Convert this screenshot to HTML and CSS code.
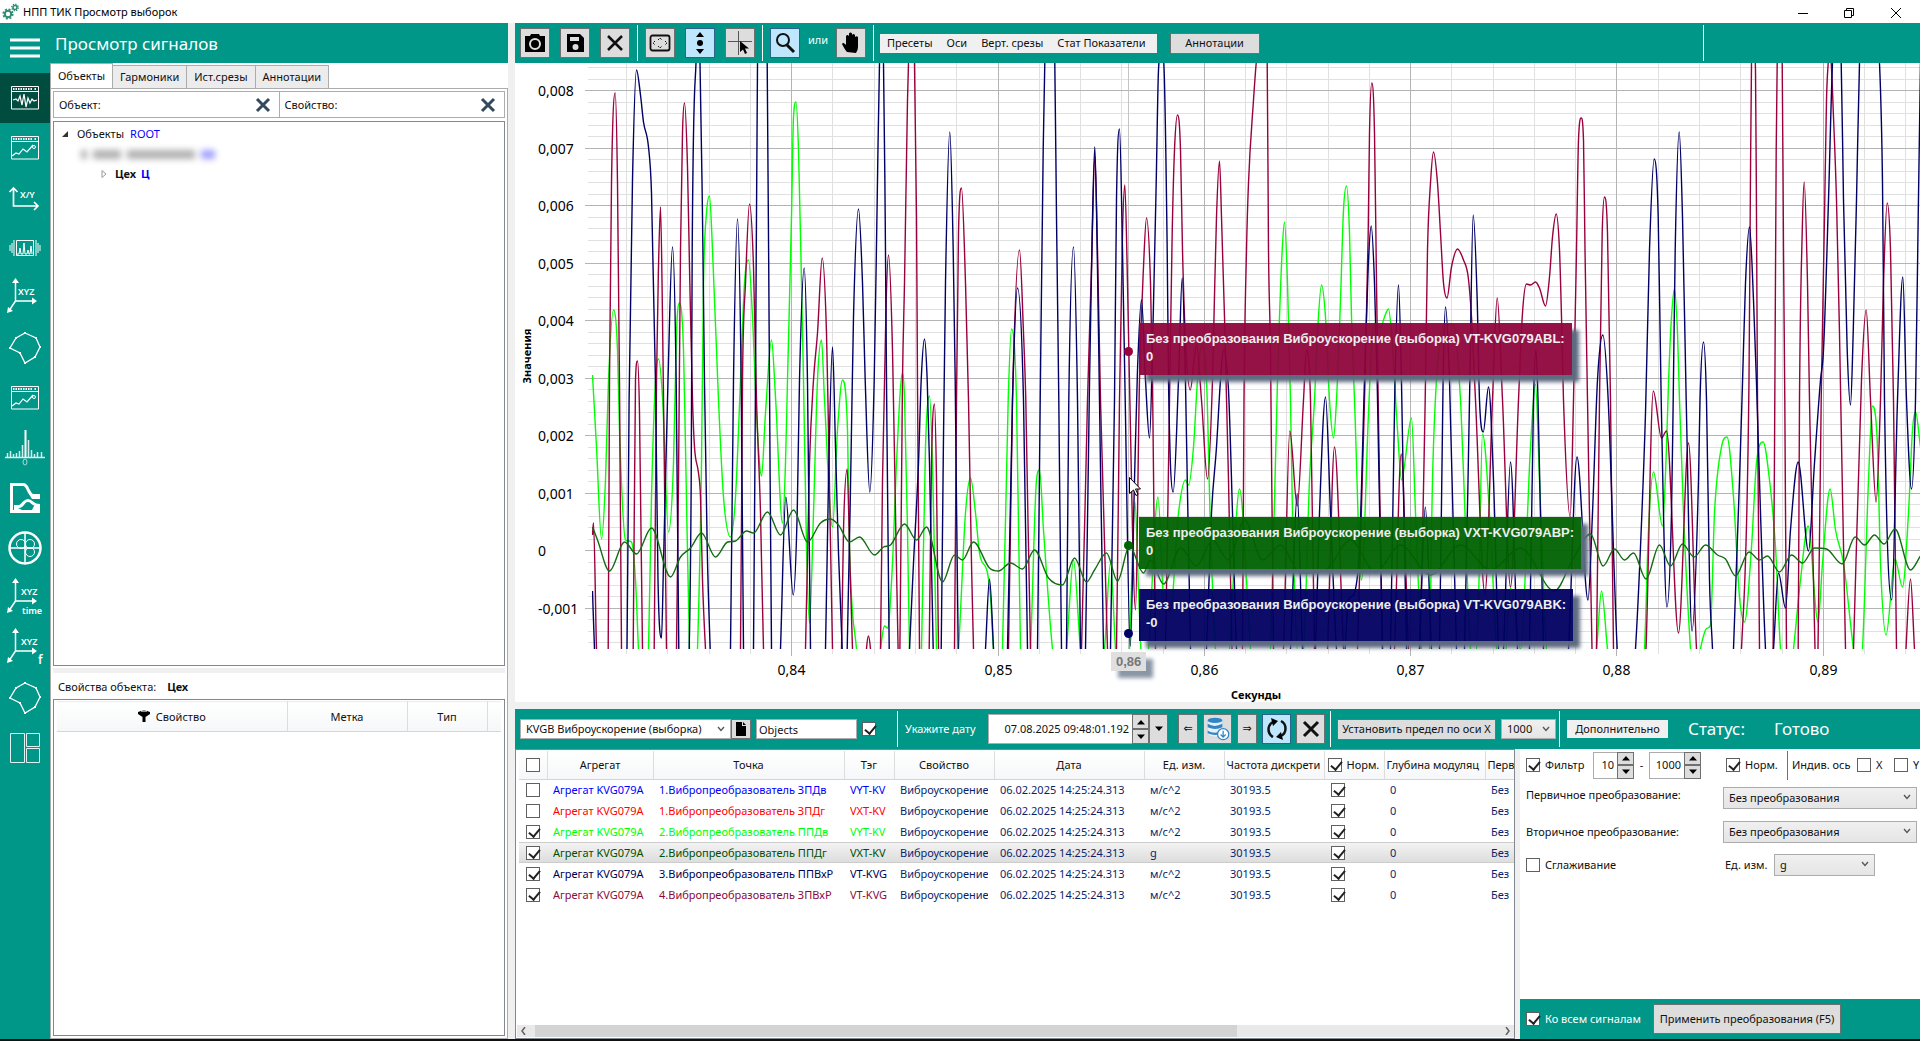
FILE: index.html
```html
<!DOCTYPE html>
<html lang="ru">
<head>
<meta charset="utf-8">
<title>НПП ТИК Просмотр выборок</title>
<link rel="stylesheet" href="styles.css">
</head>
<body>
<svg class="defs" aria-hidden="true">
  <symbol id="i-window" viewBox="0 0 50 50"><path d="M11.500 13.500h27v22.500h-27zM11.500 18.500h27" fill="none" stroke="#fff"/><path d="M13 16h20M34.500 16h2.500" stroke="#fff" stroke-width="2" stroke-dasharray="1.500 1"/></symbol>
  <symbol id="i-xyz" viewBox="0 0 50 50"><path d="M15.500 8v20h19M15.500 28l-6 9" fill="none" stroke="#fff" stroke-width="1.500"/><path d="M15.500 5l3.500 5h-7zM37 28l-5 3.500v-7zM7 40l1-6 5 4z" fill="#fff"/></symbol>
  <symbol id="i-poly" viewBox="0 0 50 50"><path d="M25 10l11 5 4 9-5 10-10 6-5-10-10-5 6-10z" fill="none" stroke="#fff" stroke-width="1.300"/><path d="M24 9h2v2h-2zM35 14h2v2h-2zM39 23h2v2h-2zM34 33h2v2h-2zM24 39h2v2h-2zM19 29h2v2h-2zM9 24h2v2H9zM15 14h2v2h-2z" fill="#fff"/></symbol>
  <symbol id="i-chev" viewBox="0 0 8 6"><path d="M1 1l3 3.500L7 1" fill="none" stroke="#555" stroke-width="1.300"/></symbol>
  <symbol id="i-up" viewBox="0 0 8 6"><path d="M0 5.500L4 1l4 4.500z"/></symbol>
  <symbol id="i-down" viewBox="0 0 8 6"><path d="M0 .5h8L4 5z"/></symbol>
</svg>

<header class="titlebar">
  <svg class="app-icon" viewBox="0 0 18 18"><g fill="none" stroke="#2e8b74"><circle cx="7" cy="11" r="3.200" stroke-width="2"/><circle cx="7" cy="11" r="4.800" stroke-width="1.600" stroke-dasharray="2 1.770"/><circle cx="14" cy="4.500" r="2" stroke-width="1.500"/><circle cx="14" cy="4.500" r="3.200" stroke-width="1.400" stroke-dasharray="1.300 1.200"/></g></svg>
  <h1>НПП ТИК Просмотр выборок</h1>
  <div class="window-buttons">
    <button aria-label="Свернуть"><svg viewBox="0 0 10 10"><path d="M0 5.500h10"/></svg></button>
    <button aria-label="Развернуть"><svg viewBox="0 0 10 10"><path d="M.5 2.500h7v7h-7zM2.500 2.500v-2h7v7h-2"/></svg></button>
    <button aria-label="Закрыть"><svg viewBox="0 0 10 10"><path d="M0 0l10 10M10 0L0 10"/></svg></button>
  </div>
</header>

<div class="app">
  <nav class="rail">
    <button aria-label="Меню"><svg viewBox="0 0 50 50"><path d="M10 17h30M10 25h30M10 33h30" stroke="#fff" stroke-width="3"/></svg></button>
    <button class="active" aria-label="Сигналы"><svg viewBox="0 0 50 50"><use href="#i-window"/><path d="M13 27l3-1 2 2 2-5 2 9 2-11 2 13 2-9 2 5 2-4 2 2 3-1" fill="none" stroke="#fff" stroke-width="1.200"/></svg></button>
    <button aria-label="Тренды"><svg viewBox="0 0 50 50"><use href="#i-window"/><path d="M12 33l4-3 3 1 4-5 4 3 6-7" fill="none" stroke="#fff" stroke-width="1.200"/><circle cx="34" cy="24" r="1.500" fill="none" stroke="#fff"/></svg></button>
    <button aria-label="X/Y"><svg viewBox="0 0 50 50"><path d="M13.500 16v17H38M9.500 19l4-4 4 4M34 29l4 4-4 4" fill="none" stroke="#fff" stroke-width="1.700"/><text x="20" y="25" class="t9">X/Y</text></svg></button>
    <button aria-label="Спектр окна"><svg viewBox="0 0 50 50"><path d="M16.500 17.500h17v15h-17zM17 31h2l1-6 1 6h2l1-11 1 11h2l1-4 1 4h1l1-8 1 8M14 17v16M12 20v10M10 22v6M36 17v16M38 20v10M40 22v6" fill="none" stroke="#fff"/></svg></button>
    <button aria-label="XYZ"><svg viewBox="0 0 50 50"><use href="#i-xyz"/><text x="18" y="22" class="t9">XYZ</text></svg></button>
    <button aria-label="Полигон"><svg viewBox="0 0 50 50"><use href="#i-poly"/></svg></button>
    <button aria-label="Тренды 2"><svg viewBox="0 0 50 50"><use href="#i-window"/><path d="M12 33l4-3 3 1 4-5 4 3 6-7" fill="none" stroke="#fff" stroke-width="1.200"/><circle cx="34" cy="24" r="1.500" fill="none" stroke="#fff"/></svg></button>
    <button aria-label="Спектр"><svg viewBox="0 0 50 50"><path d="M5 34.500h40M7.500 34v-4M10.500 34v-6M13.500 34v-3M16.500 34v-4M19.500 34v-6M22.500 34V22M28.500 34V17M31.500 34v-7M34.500 34v-3M37.500 34v-5M41.500 34v-5" stroke="#d2efec" stroke-width="1.500"/><path d="M25.500 35V7" stroke="#fff" stroke-width="2"/><ellipse cx="25" cy="39" rx="2" ry="3" fill="none" stroke="#a9dcd7"/></svg></button>
    <button aria-label="Каскад"><svg viewBox="0 0 50 50"><path d="M11.500 38V11.500H23q3 0 5 5t6 7h6M10 38.500h30M14 33.500h5q2 0 5-4 4-4 8 0 3 3 8 3" fill="none" stroke="#fff" stroke-width="3"/><path d="M29 21h11v5h-8zM14 35h4l6 3H14zM34 33h6v4h-8z" fill="#fff"/></svg></button>
    <button aria-label="Орбита"><svg viewBox="0 0 50 50"><circle cx="25" cy="25" r="15.500" fill="none" stroke="#fff" stroke-width="2.500"/><path d="M9 25h32M25 9v32" stroke="#fff" stroke-width="1.500"/><circle cx="21" cy="21" r="4.500" fill="none" stroke="#fff"/><circle cx="30" cy="21" r="4.500" fill="none" stroke="#fff"/><circle cx="30" cy="29" r="4.500" fill="none" stroke="#fff"/></svg></button>
    <button aria-label="XYZ time"><svg viewBox="0 0 50 50"><use href="#i-xyz"/><text x="21" y="22" class="t9">XYZ</text><text x="22" y="41" class="t8">time</text></svg></button>
    <button aria-label="XYZ f"><svg viewBox="0 0 50 50"><use href="#i-xyz"/><text x="21" y="22" class="t9">XYZ</text><text x="38" y="41" class="t12">f</text></svg></button>
    <button aria-label="Полигон 2"><svg viewBox="0 0 50 50"><use href="#i-poly"/></svg></button>
    <button aria-label="Раскладка"><svg viewBox="0 0 50 50"><path d="M10.500 10.500h14v29h-14zM26.500 10.500h13v13h-13zM26.500 25.500h13v14h-13z" fill="none" stroke="#e0f2f1"/></svg></button>
  </nav>

  <aside class="left">
    <h2>Просмотр сигналов</h2>
    <div class="tabs" role="tablist">
      <button role="tab" class="on">Объекты</button><button role="tab">Гармоники</button><button role="tab">Ист.срезы</button><button role="tab">Аннотации</button>
    </div>
    <div class="tabpage">
      <div class="filters">
        <div class="filter"><label for="f-obj">Объект:</label><input id="f-obj"><button aria-label="Очистить объект"><svg viewBox="0 0 16 16"><path d="M2 2l12 12M14 2L2 14"/></svg></button></div>
        <div class="filter"><label for="f-prop">Свойство:</label><input id="f-prop"><button aria-label="Очистить свойство"><svg viewBox="0 0 16 16"><path d="M2 2l12 12M14 2L2 14"/></svg></button></div>
      </div>
      <ul class="tree">
        <li class="l0"><svg viewBox="0 0 8 8"><path d="M7 1v6H1z" fill="#333"/></svg><span>Объекты</span><b class="code">ROOT</b></li>
        <li class="l1"><i class="m1"></i><i class="m2"></i><i class="m3"></i><i class="m4"></i></li>
        <li class="l2"><svg viewBox="0 0 8 8"><path d="M2 .5v7L6 4z" fill="none" stroke="#999"/></svg><strong>Цех</strong><strong class="blue">Ц</strong></li>
      </ul>
      <div class="hsplit"></div>
      <p class="prop-title">Свойства объекта: <strong>Цех</strong></p>
      <div class="props">
        <table>
          <colgroup><col class="p1"><col class="p2"><col class="p3"><col></colgroup>
          <thead><tr><th><svg class="funnel" viewBox="0 0 12 12"><path d="M0 2q6-3 12 0v2L7.500 7v5h-3V7L0 4z"/><path d="M3 1.500h6" stroke="#5aa0d8"/></svg>Свойство</th><th>Метка</th><th>Тип</th><th></th></tr></thead>
        </table>
      </div>
    </div>
  </aside>

  <main class="main">
    <div class="bar top">
      <button class="tool" aria-label="Снимок"><svg viewBox="0 0 24 24"><path d="M2 5h5l1-2h8l1 2h5v16H2z"/><circle cx="12" cy="13" r="5" fill="none" stroke="#ddd" stroke-width="2"/></svg></button>
      <button class="tool" aria-label="Сохранить"><svg viewBox="0 0 24 24"><path d="M4 3h13l4 4v14H4z"/><path d="M7 6h9v4H7zM12.500 13a3 3 0 110 6 3 3 0 010-6z" fill="#ddd"/></svg></button>
      <button class="tool" aria-label="Удалить"><svg viewBox="0 0 24 24"><path d="M5 5l14 14M19 5L5 19" stroke="#111" stroke-width="2.500"/></svg></button>
      <i class="sep"></i>
      <button class="tool" aria-label="Вписать"><svg viewBox="0 0 24 24"><rect x="2.500" y="4.500" width="19" height="15" rx="2" fill="none" stroke="#111" stroke-width="1.800"/><path d="M10 9l2-2 2 2M10 15l2 2 2-2M7 10l-2 2 2 2M17 10l2 2-2 2" fill="none" stroke="#111" stroke-dasharray="2 1"/></svg></button>
      <button class="tool on" aria-label="Вертикальный масштаб"><svg viewBox="0 0 24 24"><path d="M12 1l4 5H8zM12 23l4-5H8z"/><circle cx="12" cy="12" r="3"/></svg></button>
      <button class="tool" aria-label="Курсор"><svg viewBox="0 0 24 24"><path d="M0 10.500h24M10.500 0v24" stroke="#555"/><path d="M12 10v11l3-2.500 2 4.500 2-1-2-4.500h4z"/></svg></button>
      <i class="sep"></i>
      <button class="tool on" aria-label="Лупа"><svg viewBox="0 0 24 24"><circle cx="10" cy="9" r="6" fill="none" stroke="#111" stroke-width="2"/><path d="M14 14l7 7" stroke="#111" stroke-width="3"/></svg></button>
      <span class="or">или</span>
      <button class="tool" aria-label="Рука"><svg viewBox="0 0 24 24"><path d="M8 21q-2-2-5-8 1-2 3 0l1 1V5q1.500-2 3 0V2.500q1.500-2 3 0V4q1.500-2 3 0v2q1.500-1.500 3 0v10q0 3-2 6z"/></svg></button>
      <i class="sep"></i>
      <div class="menu"><button>Пресеты</button><button>Оси</button><button>Верт. срезы</button><button>Стат Показатели</button></div>
      <button class="btn annot">Аннотации</button>
      <i class="sep far"></i>
    </div>

    <section class="chart" id="chart" aria-label="График сигналов">
      <svg id="plot"></svg>
      <div class="tip maroon">Без преобразования Виброускорение (выборка) VT-KVG079ABL:<br>0</div>
      <div class="tip green">Без преобразования Виброускорение (выборка) VXT-KVG079ABP:<br>0</div>
      <div class="tip navy">Без преобразования Виброускорение (выборка) VT-KVG079ABK:<br>-0</div>
      <div class="xtip">0,86</div>
      <svg class="pointer" viewBox="0 0 12 19"><path d="M.5.500v16l4-3.500 2.500 5.500 2-1-2.500-5.500h5z" fill="#fff" stroke="#000"/></svg>
    </section>
    <div class="hsplit"></div>

    <div class="bar low">
      <span class="sel preset"><select aria-label="Пресет"><option>KVGB Виброускорение (выборка)</option></select><svg><use href="#i-chev"/></svg></span>
      <button class="doc" aria-label="Новый"><svg viewBox="0 0 10 14"><path d="M0 0h6v4h4v10H0zM7 0l3 3H7z"/></svg></button>
      <input class="objects" aria-label="Объекты" value="Objects">
      <input type="checkbox" class="c1" checked aria-label="Использовать объекты">
      <i class="sep"></i>
      <label class="date-label" for="date">Укажите дату</label>
      <span class="date"><input id="date" value="07.08.2025 09:48:01.192"><span class="spin"><button aria-label="Больше"><svg><use href="#i-up"/></svg></button><button aria-label="Меньше"><svg><use href="#i-down"/></svg></button></span><button class="drop" aria-label="Календарь"><svg><use href="#i-down"/></svg></button></span>
      <button class="tool narrow" aria-label="Назад">⇐</button>
      <button class="tool" aria-label="Загрузить"><svg viewBox="0 0 28 28"><path d="M2 4v17q8 5 17 0V4z" fill="#e9eef2" stroke="#b8c4cc" stroke-width=".5"/><g fill="#2f86c6"><ellipse cx="10.500" cy="4" rx="8.500" ry="3"/><path d="M2 8q8 5 17 0v4q-8 4-17 0zM2 16q8 5 17 0v3q-8 4-17 0z"/></g><circle cx="20" cy="20" r="6.500" fill="#fff" stroke="#2f86c6" stroke-width="1.500"/><path d="M20 16v7M17 20.500l3 3 3-3" fill="none" stroke="#2f86c6" stroke-width="1.500"/></svg></button>
      <button class="tool narrow" aria-label="Вперёд">⇒</button>
      <button class="tool on" aria-label="Обновить"><svg viewBox="0 0 24 24"><path d="M8 20A8.500 8.500 0 018 5M16 4a8.500 8.500 0 010 15" fill="none" stroke="#111" stroke-width="2.500"/><path d="M6 1l7 3-5 5zM18 23l-7-3 5-5z"/></svg></button>
      <button class="tool" aria-label="Отмена"><svg viewBox="0 0 24 24"><path d="M5 5l14 14M19 5L5 19" stroke="#111" stroke-width="3"/></svg></button>
      <i class="sep"></i>
      <button class="btn limit">Установить предел по оси X</button>
      <span class="sel lim"><select aria-label="Предел"><option>1000</option></select><svg><use href="#i-chev"/></svg></span>
      <i class="sep"></i>
      <button class="more">Дополнительно</button>
      <span class="status">Статус:</span><output class="status ready">Готово</output>
    </div>

    <div class="lower">
      <div class="gridbox">
        <div class="gridclip">
          <table class="grid">
            <colgroup><col class="g1"><col class="g2"><col class="g3"><col class="g4"><col class="g5"><col class="g6"><col class="g7"><col class="g8"><col class="g9"><col class="g10"><col class="g11"></colgroup>
            <thead><tr><th><input type="checkbox" aria-label="Выбрать все"></th><th>Агрегат</th><th>Точка</th><th>Тэг</th><th>Свойство</th><th>Дата</th><th>Ед. изм.</th><th><span class="left-cut">Частота дискрети</span></th><th><label class="norm"><input type="checkbox" checked>Норм.</label></th><th><span class="left-cut">Глубина модуляц</span></th><th><span class="left-cut">Перв</span></th></tr></thead>
            <tbody id="rows"></tbody>
          </table>
        </div>
        <div class="hscroll"><svg viewBox="0 0 5 8"><path d="M4 0L1 4l3 4"/></svg><div class="track"><div class="thumb"></div></div><svg viewBox="0 0 5 8"><path d="M1 0l3 4-3 4"/></svg></div>
      </div>
      <div class="vsplit"></div>
      <form class="options" onsubmit="return false">
        <div class="row first">
          <label class="chk"><input type="checkbox" checked>Фильтр</label>
          <span class="num low-f"><input aria-label="От" value="10"><span class="spin"><button aria-label="Больше"><svg><use href="#i-up"/></svg></button><button aria-label="Меньше"><svg><use href="#i-down"/></svg></button></span></span>
          <span class="dash">-</span>
          <span class="num high-f"><input aria-label="До" value="1000"><span class="spin"><button aria-label="Больше"><svg><use href="#i-up"/></svg></button><button aria-label="Меньше"><svg><use href="#i-down"/></svg></button></span></span>
          <label class="chk n"><input type="checkbox" checked>Норм.</label>
          <i class="vline"></i>
          <span class="axis">Индив. ось</span>
          <label class="chk x"><input type="checkbox">X</label>
          <label class="chk"><input type="checkbox">Y</label>
        </div>
        <div class="row"><label class="cap raised" for="s1">Первичное преобразование:</label><span class="sel wide"><select id="s1"><option>Без преобразования</option></select><svg><use href="#i-chev"/></svg></span></div>
        <div class="row"><label class="cap" for="s2">Вторичное преобразование:</label><span class="sel wide"><select id="s2"><option>Без преобразования</option></select><svg><use href="#i-chev"/></svg></span></div>
        <div class="row"><label class="chk cap2"><input type="checkbox">Сглаживание</label><label class="unit" for="s3">Ед. изм.</label><span class="sel short"><select id="s3"><option>g</option></select><svg><use href="#i-chev"/></svg></span></div>
        <div class="apply"><label class="chk"><input type="checkbox" checked>Ко всем сигналам</label><button class="btn">Применить преобразования (F5)</button></div>
      </form>
    </div>
  </main>
</div>
<script src="chart.js"></script>
</body>
</html>
```
FILE: styles.css
```css
* { box-sizing: border-box; }
:root { --teal: #009688; --ui: "Noto Sans", "Open Sans", sans-serif; }
body { margin: 0; height: 100vh; display: flex; flex-direction: column; overflow: hidden; font: 11px/16px var(--ui); color: #111; background: #fff; border-bottom: 2px solid #111; }
button, input, select { font: inherit; color: inherit; margin: 0; }
button { padding: 0; cursor: pointer; }
h1, h2, p, ul { margin: 0; padding: 0; font-weight: 400; }
.defs { position: absolute; width: 0; height: 0; }

.titlebar { flex: none; height: 23px; display: flex; align-items: center; }
.app-icon { width: 18px; height: 18px; margin: 0 4px 0 1px; }
.titlebar h1 { font-size: 11px; color: #000; }
.window-buttons { margin-left: auto; display: flex; }
.window-buttons button { width: 46px; height: 20px; border: 0; background: none; }
.window-buttons button:last-child { width: 48px; }
.window-buttons svg { width: 10px; height: 10px; display: block; margin: 2px auto 0; fill: none; stroke: #000; }

.app { flex: 1; min-height: 0; display: flex; }
.rail { flex: none; width: 50px; background: var(--teal); display: flex; flex-direction: column; }
.rail button { height: 50px; border: 0; background: none; }
.rail .active { background: #004d40; }
.rail svg { width: 50px; height: 50px; display: block; }
.rail text { fill: #fff; font-family: var(--ui); }
.t8 { font-size: 9px; font-weight: 600; }
.t9 { font-size: 9px; font-weight: 600; }
.t12 { font-size: 12px; font-weight: 600; }

.left { flex: none; width: 458px; display: flex; flex-direction: column; }
.left h2 { flex: none; height: 40px; background: var(--teal); color: #fff; font-size: 17px; line-height: 42px; padding-left: 5px; }
.tabs { flex: none; height: 25px; display: flex; align-items: flex-end; }
.tabs button { height: 23px; border: 1px solid #acacac; border-bottom: 0; background: #ececec; padding: 0 7px; margin-right: -1px; }
.tabs button.on { height: 25px; background: #fff; padding: 0 7px; }
.tabpage { flex: 1; min-height: 0; border: 1px solid #acacac; padding: 2px; display: flex; flex-direction: column; }
.filters { flex: none; display: flex; height: 27px; }
.filter { flex: 1; display: flex; align-items: center; border: 1px solid #acacac; padding: 0 8px 0 5px; min-width: 0; }
.filter + .filter { border-left: 0; }
.filter input { flex: 1; min-width: 0; border: 0; background: none; outline: 0; }
.filter button { width: 16px; height: 16px; border: 0; background: none; }
.filter svg { display: block; width: 16px; height: 16px; stroke: #34495e; stroke-width: 3; }
.tree { flex: 547; margin-top: 3px; border: 1px solid #828790; list-style: none; padding: 2px 0 0 7px; }
.tree li { height: 20px; display: flex; align-items: center; gap: 6px; }
.tree svg { width: 8px; height: 8px; margin-right: 2px; }
.tree .code { font-weight: 400; color: #00f; }
.tree .blue { color: #00f; }
.tree .l1 { padding-left: 20px; filter: blur(3px); gap: 6px; }
.tree .l1 i { height: 9px; background: #b0b0b0; }
.tree .m1 { width: 6px; } .tree .m2 { width: 28px; } .tree .m3 { width: 68px; }
.tree .l1 .m4 { width: 14px; background: #a0a0ff; }
.tree .l2 { padding-left: 39px; gap: 5px; }
.hsplit { flex: none; height: 7px; background: #f0f0f0; }
.left .hsplit { height: 5px; margin-top: 2px; }
.prop-title { flex: none; height: 26px; line-height: 28px; padding-left: 5px; }
.prop-title strong { margin-left: 8px; }
.props { flex: 336; border: 1px solid #828790; padding: 1px 3px; }
.props table, .grid { border-collapse: collapse; table-layout: fixed; }
.props table { width: 100%; }
.props th { height: 30px; border-top: 1px solid #eee; border-right: 1px solid #ddd; border-bottom: 1px solid #d5d5d5; background: linear-gradient(#fff, #f6f7f9); font-weight: 400; padding: 0; }
.props th:last-child { border-right: 0; }
.p1 { width: 230px; } .p2 { width: 120px; } .p3 { width: 80px; }
.funnel { width: 12px; height: 12px; margin-right: 6px; vertical-align: -1px; }

.main { flex: 1; min-width: 0; display: flex; flex-direction: column; border-left: 7px solid #f0f0f0; }
.bar { flex: none; height: 40px; background: var(--teal); display: flex; align-items: center; color: #fff; overflow: hidden; white-space: nowrap; }
.bar > * { flex: none; }
.sep { width: 1px; height: 36px; background: #fff; }
.tool { width: 30px; height: 30px; border: 1px solid #707070; background: #ddd; color: #111; display: flex; align-items: center; justify-content: center; }
.tool svg { width: 24px; height: 24px; }
.tool.on { background: #bee6fd; border-color: #2c628b; }
.top { padding-left: 5px; }
.top .tool + .tool { margin-left: 10px; }
.top .sep { margin: 0 7px; }
.or { margin: -6px 8px 0; width: 20px; }
.top .menu { display: flex; background: #f0f0f0; color: #111; height: 19px; margin-left: -1px; padding-right: 4px; }
.menu button { border: 0; background: none; padding: 0 7px; }
.btn { border: 1px solid #707070; background: #ddd; color: #111; }
.annot { width: 90px; height: 21px; margin-left: 13px; }
.top .far { margin: 0 216px 0 auto; }

.chart { flex: 1; min-height: 0; position: relative; overflow: hidden; background: #fff; }
#plot { width: 100%; height: 100%; display: block; }
#plot text { font-family: var(--ui); fill: #000; }
#plot .tick { font-size: 14px; }
#plot .title { font-size: 11px; font-weight: 700; }
.tip { position: absolute; left: 624px; height: 52px; padding: 7px 7px 0; font: 700 13px/18px "Liberation Sans", sans-serif; color: #eee; white-space: nowrap; box-shadow: 7px 7px 4px #5d6b80; }
.tip.maroon { top: 260px; background: #8e053cf2; }
.tip.green { top: 454px; background: #006100f2; }
.tip.navy { top: 526px; background: #000061f2; }
.xtip { position: absolute; left: 596px; top: 589px; padding: 0 5px; font: 700 13px/19px "Liberation Sans", sans-serif; color: #777; background: #ddde; box-shadow: 7px 7px 4px #8a95a5; }
.pointer { position: absolute; left: 614px; top: 414px; width: 12px; height: 19px; }

.low { padding-left: 5px; }
.sel { position: relative; display: inline-block; height: 22px; color: #111; }
.sel select { appearance: none; width: 100%; height: 100%; border: 1px solid #acacac; border-radius: 0; background: linear-gradient(#f0f0f0, #e5e5e5); padding: 0 16px 0 5px; }
.sel svg { position: absolute; right: 6px; top: 7px; width: 8px; height: 6px; pointer-events: none; }
.preset { width: 211px; height: 20px; }
.preset select { background: #fff; }
.doc { width: 20px; height: 20px; border: 1px solid #707070; background: #ddd; }
.doc svg { width: 10px; height: 14px; display: block; margin: auto; }
.objects { width: 101px; height: 20px; margin-left: 5px; border: 1px solid #acacac; padding: 0 2px; color: #111; }
input[type=checkbox] { appearance: none; flex: none; position: relative; width: 14px; height: 14px; border: 1px solid #606060; background: #fff; margin: 0; }
input[type=checkbox]:checked::after { content: ""; position: absolute; left: 4px; top: 0; width: 5px; height: 9px; border: solid #212121; border-width: 0 2px 2px 0; transform: rotate(40deg); }
.low .c1 { margin: 0 21px 0 5px; }
.date-label { margin: 0 0 0 7px; width: 83px; }
.date { display: flex; height: 30px; width: 180px; background: #fff; color: #111; }
.date input { flex: 1; min-width: 0; border: 1px solid #acacac; border-right: 0; text-align: right; padding: 0 3px; background: #fff; }
.spin { display: flex; flex-direction: column; width: 17px; }
.spin button, .drop { flex: 1; border: 1px solid #707070; background: #ddd; display: flex; align-items: center; justify-content: center; }
.spin svg, .drop svg { width: 8px; height: 6px; }
.date .drop { flex: none; width: 19px; }
.low .tool { width: 29px; margin-left: 5px; }
.low .tool.narrow { width: 20px; font-family: "DejaVu Sans", sans-serif; }
.low .date + .narrow { margin-left: 10px; }
.low .tool + .sep { margin-left: 5px; }
.limit { width: 159px; height: 21px; margin: 0 5px 0 6px; white-space: nowrap; overflow: hidden; }
.lim { width: 55px; height: 20px; margin-right: 3px; }
.more { width: 101px; height: 18px; border: 0; background: #f0f0f0; color: #111; margin: 0 20px 0 7px; }
.status { font-size: 17px; width: 86px; }

.lower { flex: none; height: 290px; display: flex; }
.gridbox { flex: 1; min-width: 0; border: 1px solid #828790; padding: 1px 0 1px 3px; display: flex; flex-direction: column; }
.gridclip { flex: 1; overflow: hidden; }
.grid { width: 1066px; }
.grid th { height: 28px; border-right: 1px solid #ddd; border-bottom: 1px solid #d5d5d5; background: linear-gradient(#fff, #f6f7f9); font-weight: 400; padding: 0; overflow: hidden; white-space: nowrap; }
.grid th:first-child input, .grid td input { display: block; margin-left: 7px; }
.left-cut { display: block; text-align: left; padding-left: 2px; overflow: hidden; }
.norm { display: flex; align-items: center; gap: 5px; padding-left: 3px; }
.grid td { height: 21px; padding: 0; color: #0b1f6b; }
.grid td span { display: block; margin: 0 6px; overflow: hidden; white-space: nowrap; }
.grid .current td { background: linear-gradient(#f4f4f4, #dcdcdc); box-shadow: inset 0 1px #ccc, inset 0 -1px #ccc; }
.grid .s-blue { color: #00f; } .grid .s-red { color: #f00; } .grid .s-lime { color: #0f0; }
.grid .s-green { color: #005000; } .grid .s-navy { color: #000050; } .grid .s-maroon { color: #8b0a3d; }
.g1 { width: 28px; } .g2 { width: 106px; } .g3 { width: 191px; } .g4 { width: 50px; } .g5 { width: 100px; } .g6 { width: 150px; } .g7 { width: 80px; } .g8 { width: 100px; } .g9 { width: 60px; } .g10 { width: 101px; } .g11 { width: 100px; }
.hscroll { flex: none; height: 12px; margin-left: -2px; background: #e9e9e9; display: flex; align-items: center; padding: 0 4px; }
.hscroll svg { width: 5px; height: 8px; fill: none; stroke: #606060; stroke-width: 1.5; }
.track { flex: 1; height: 100%; padding: 0 9px; }
.thumb { width: 73%; height: 100%; background: #d3d3d3; }
.vsplit { flex: none; width: 5px; background: #f0f0f0; }
.options { flex: none; width: 400px; display: flex; flex-direction: column; white-space: nowrap; overflow: hidden; }
.row { flex: none; display: flex; align-items: center; height: 34px; padding-left: 6px; }
.row > * { flex: none; }
.row.first { height: 32px; }
.row:nth-child(4) { height: 32px; }
.chk { display: flex; align-items: center; gap: 5px; }
.first .chk:first-child { width: 67px; }
.num { display: flex; height: 27px; }
.num input { flex: 1; min-width: 0; border: 1px solid #acacac; border-right: 0; padding: 0 3px; text-align: right; }
.low-f { width: 41px; } .high-f { width: 52px; }
.dash { width: 15px; text-align: center; }
.chk.n { width: 61px; margin-left: 25px; }
.vline { width: 1px; height: 29px; background: #707070; margin-right: 4px; }
.axis { width: 65px; }
.chk.x { width: 37px; }
.cap { width: 197px; }
.raised { padding-bottom: 6px; }
.wide { width: 194px; }
.cap2 { width: 199px; }
.unit { width: 49px; }
.short { width: 101px; }
.apply { margin-top: auto; height: 40px; background: var(--teal); color: #fff; display: flex; align-items: center; padding: 0 0 1px 6px; }
.apply .chk { width: 127px; }
.apply .btn { width: 188px; height: 30px; }
```
FILE: chart.js
```js
const FRAME = { left: 515, top: 63, right: 1920, bottom: 702 };
const PLOT = { left: 592, top: 63, bottom: 649 };

const traces = [
  { color: '#00ff00', points: `592,375 596,447 601,539 605,480 608,380 613,310 617,350 619,430 625,540 631,542 635,580 638,649 643,720 648,649 651,497 655,380 658,359 662,397 668,532 673,463 676,333 679,303 683,350 685,447 689,649 693,720 697,649 701,463 703,283 706,213 709,196 712,250 718,400 723,497 730,537 735,497 740,380 744,283 748,260 752,317 756,413 761,476 765,413 771,340 775,397 782,523 785,463 787,380 791,217 793,117 795.500,102 798,150 801,283 803,380 806,547 809,623 813,513 817,380 821,340 824,400 832,527 837,430 842,380 847,430 849,547 856,649 868,760 880,649 884,626 887,628 892,563 896,463 902,373 904,397 907,530 909,649 915,760 921,649 925,447 929,396 932,463 936,649 947,760 958,649 965,513 970,478 975,513 979,553 987,573 990,597 993,649 998,700 1002,649 1007.700,400 1011,329 1016,400 1020,649 1025,720 1030,649 1036,480 1039,470 1043,530 1052,649 1060,700 1066,649 1073,560 1080,649 1092,720 1104,649 1110,563 1115,649 1123,760 1129,649 1134.500,502 1138,590 1143,690 1148,649 1157.500,497 1164,610 1170,610 1178,513 1185,480 1188,485 1193,447 1197,380 1201,345 1206,380 1210,530 1215,649 1222,700 1229,649 1239,489 1250,649 1260,760 1270,649 1277,380 1279,317 1281.700,250 1284,222 1287,283 1290,400 1292,513 1298,660 1303,649 1309,480 1314,400 1317,333 1321,285 1325,317 1329,400 1333,438 1336,400 1340,300 1343,210 1346,186 1349,233 1351,317 1354,400 1361,580 1368,413 1372,333 1375,323 1380,328 1384,317 1388,309 1391,333 1397,430 1401,480 1411,418 1415,513 1421,649 1425,680 1429,649 1432,480 1436,380 1444,325 1453,325 1460,400 1462,447 1470,649 1474,670 1478,600 1482,434 1490,530 1496,649 1503,680 1510,588 1520,649 1530,447 1535,384 1539,480 1546,649 1570,760 1596,649 1601,591 1607,649 1625,800 1644,649 1648,530 1653,472 1662,526 1666,447 1668,383 1671,317 1674,289 1677,333 1679,400 1683,513 1690,649 1694,690 1700,649 1705,630 1710,625 1714,513 1721,447 1726.500,437 1733,497 1739,597 1744,622 1751,547 1756,463 1762.600,442 1769,480 1775,547 1780,649 1787,700 1793,649 1800,580 1807.600,526 1817.600,622 1822,563 1829.600,489 1835,530 1843,563 1853,649 1858,680 1862,649 1868,480 1872,406 1877,447 1880,563 1885.600,635 1894.500,559 1902,587 1908,513 1912,430 1915,412 1920,447` },
  { color: '#99003d', points: `592,535 593,523 596,649 602,800 607.700,649 609,380 611,183 614.700,93 617,183 619,383 621,649 627,800 632.700,649 635,380 637,361 639,413 642,649 648,800 653.700,649 656,380 658,267 660,207 662,317 664,480 666,649 671,800 676,649 678,480 680,250 682,133 684,103 687,167 689,267 692,400 694,447 698,473 700,497 702,580 705,649 722,900 740,649 742,380 745,283 749,204 753,267 756,400 760,513 763,649 784,900 805,649 809,463 813,380 817,333 821.700,258 826,333 828,430 832,649 836,720 841,649 843,530 846.700,469 849,547 852,649 860,760 866,649 868,636 870,649 875,720 880,649 882,480 885.700,300 888,255 892,350 895,513 897.600,649 898.500,670 899.400,649 902,380 904,283 907,100 908,63 911,10 914,63 916,217 917,383 919,649 924,800 928.700,649 931,463 934,404 936,480 938,649 946,900 954,649 956,400 958,233 961,188 965,283 968,400 971,563 973,649 990,900 1008,649 1012,400 1019,250 1023,333 1025.300,400 1030,649 1055,900 1081,649 1087,400 1091,267 1094.300,156 1097,250 1100,400 1107,649 1111,720 1116,649 1119,400 1122,233 1124.300,185 1127,283 1129,383 1135,610 1139,380 1143,267 1146,218 1150,283 1152,380 1155,649 1160,760 1165,649 1169,400 1171.700,233 1174,150 1177,115 1180,150 1182,250 1185,340 1189.700,390 1196,345 1201,400 1207,479 1212,380 1213.500,317 1216,217 1219,161 1221,217 1224,317 1228,480 1231.500,649 1237,760 1242,649 1243.500,400 1246,250 1248,183 1253,100 1255.700,63 1261,10 1266.700,63 1268,250 1270,350 1273,649 1278,720 1283,649 1289.300,431 1296.700,506 1303,400 1306,350 1310,400 1314,649 1320,760 1327,649 1334,447 1343,649 1350,760 1357,649 1364,400 1367.700,233 1369,133 1371.300,83 1374,133 1376,283 1377.700,400 1382,649 1388,760 1394,649 1400.700,454 1408,649 1413,700 1419,649 1424.700,400 1427,250 1430,183 1433,152 1437,183 1440,233 1443,283 1446.500,298 1451,267 1457,249 1463,260 1467.700,277 1471,317 1475,400 1484.400,594 1492,400 1496.700,298 1502,400 1510,587 1518,400 1522,313 1526,284 1530,285 1535,282 1539,288 1545,306 1549,277 1552,237 1555.700,214 1559,250 1561,317 1563,400 1569.700,517 1573,400 1576,250 1578,140 1580.700,118 1583,140 1584.500,250 1587,400 1591.500,649 1594,720 1596,649 1599,400 1601.700,233 1604,197 1607,233 1610,400 1613,649 1629,900 1645.500,649 1652.800,391 1661,438 1666,431 1678,633 1688,443 1696,649 1718,900 1741,649 1748.500,380 1749.700,217 1751,63 1753.500,50 1755,70 1756,217 1757,400 1759,649 1766,800 1772.600,649 1774.300,400 1775.700,150 1776.700,63 1779,30 1781.700,63 1783,250 1784.300,400 1786,649 1792,800 1797.700,649 1799,400 1801.700,233 1803.700,182 1807,283 1809,400 1814.500,649 1816,670 1817.500,649 1820.700,400 1824,217 1826,100 1827.700,63 1829,50 1830.700,63 1833,117 1836,200 1839,333 1845,649 1849,760 1853,649 1861,380 1865.700,310 1870,400 1875.600,502 1880,400 1883,283 1886.700,203 1890,250 1893,400 1896,649 1901,760 1905.500,649 1910,579 1914,649 1920,740` },
  { color: '#000066', points: `592,591 594,649 610,900 626.500,649 628.600,400 632,180 636,70 640,95 643,122 648,147 651,193 655,383 657.500,580 661,638 663,563 667.500,380 672,247 675.700,383 678.300,649 683.500,800 688.700,649 690.700,480 691.700,250 695.500,63 697.500,45 699.500,63 702,217 704,383 706.700,547 709.700,649 720,900 730,649 733,380 737,219 740.700,383 743,649 748,800 753,649 755,380 757,63 762,-100 766.700,63 769,383 771,649 776,760 780,649 785.300,497 792.700,595 796.700,513 799,380 803.700,268 807,383 810,649 818,800 825,649 828,480 832,347 835,447 838,553 841.700,649 844,680 846.700,649 850.700,447 853,317 858,209 862,283 864.700,380 869.300,492 873.700,380 876.700,200 879,63 881,45 883,63 884.700,217 886,380 888.700,649 899,900 909,649 913,563 918,463 920.700,380 924,339 926.700,380 929,463 932.700,649 937,760 940.700,649 942.700,463 945,283 949.300,132 952.700,250 954.700,380 957.700,649 971,900 985,649 989,579 993,649 1000,800 1007,649 1012,400 1017,288 1023,400 1027,649 1032,760 1037,649 1039.700,400 1042.700,150 1044.300,63 1049,-60 1054.300,63 1056,217 1058.300,400 1061,649 1064,700 1066,649 1068.300,400 1073,247 1077,400 1080,649 1083,700 1085,649 1089,383 1091.700,233 1094.300,147 1096.700,250 1099,400 1103,649 1106,700 1110,649 1114,400 1116,200 1119,129 1122,250 1124.700,400 1129.800,646 1134,480 1137,370 1141,300 1145,380 1149,438 1152.700,317 1155.700,183 1158,70 1161,50 1163.300,63 1166.700,250 1168,380 1172.700,492 1178,380 1181.700,278 1185,383 1190,649 1198,760 1206,649 1211,513 1216,447 1220,380 1223,350 1228,390 1232,513 1236,649 1263,900 1290,649 1296.700,494 1302,649 1309,740 1315,649 1319,513 1325,397 1330,513 1336,649 1342,680 1348,600 1354,593 1359,547 1364,380 1367.700,267 1370.700,226 1374,283 1376.700,383 1382,649 1386,700 1390,649 1394.500,380 1398,285 1401,383 1406,649 1413,760 1419,649 1424.800,507 1431,649 1435,700 1439,649 1442.600,380 1445,307 1449,380 1456,649 1460,700 1464,649 1469,400 1472.700,215 1476.700,300 1479,400 1482.800,432 1488,387 1493,480 1498,649 1500,670 1503,649 1510,462 1517,649 1523,740 1529,649 1533,400 1535.500,350 1537.500,400 1543,649 1555,800 1568,649 1576.500,457 1587.500,600 1592,513 1597,380 1602.300,335 1607.700,400 1614,580 1616.700,649 1626,760 1635,649 1640,547 1645,413 1649,250 1653.700,159 1657.700,217 1660.700,400 1666.400,607 1671,513 1672.700,400 1674.700,250 1678.700,132 1682,217 1685.700,400 1691.500,631 1698,480 1699.500,400 1703,342 1706,400 1709,580 1712,649 1722,900 1733,649 1739,480 1742,383 1745,283 1749,227 1753,300 1756,383 1760,513 1765,649 1769,700 1773,649 1778,573 1785,608 1790,530 1797.700,462 1808,551 1814,463 1820,380 1823,350 1828,200 1832,63 1836,20 1840.700,63 1843,200 1846.700,350 1850,405 1852.700,333 1856,200 1859,63 1868,-40 1879,63 1882,183 1884,400 1891.300,600 1897,400 1902.300,277 1906,400 1911,489 1915,400 1917.700,217 1920,63` },
  { color: '#146b14', points: `592,527 597,540 609,571 624,542 636,554 651,528 670,577 680,557 690,548 701,533 715,557 727,542 735,541 746,531 753,533 767,512 780,535 793,510 807,542 820,523 830,519 838,525 849,542 859,537 874,555 883,547 890,545 904,524 916,540 926,527 942,582 954,555 962,560 973,542 989,568 998,571 1010,563 1022,569 1034,550 1048,578 1062,585 1074,558 1086,582 1094,570 1106,553 1117,581 1129,546 1143,573 1150,560 1163,584 1180,548 1196,566 1212,540 1228,560 1244,520 1262,560 1280,545 1300,573 1325,570 1350,540 1375,572 1400,545 1430,575 1460,545 1490,570 1520,548 1554,591 1572,560 1590,534 1602.600,566 1614,549 1624,560 1633,553 1645.500,579 1659,545 1670,566 1682,544 1693.600,557 1705,545 1717,555 1725,559 1735,576 1748.500,552 1759,560 1767,556 1779,572 1791,555 1802,563 1814,548 1826,549 1841.600,564 1854.700,537 1864,545 1874,535 1883.500,544 1894.500,529 1910,570 1920,556` }
];

// Monotone cubic path: keeps peaks flat and never overshoots between samples.
function smooth(p) {
  const n = p.length, s = [], m = [];
  for (let i = 0; i < n - 1; i++) s.push((p[i + 1][1] - p[i][1]) / (p[i + 1][0] - p[i][0]));
  m[0] = s[0]; m[n - 1] = s[n - 2];
  for (let i = 1; i < n - 1; i++) {
    const a = Math.abs(s[i - 1]), b = Math.abs(s[i]);
    m[i] = s[i - 1] * s[i] <= 0 ? 0 : Math.sign(s[i]) * Math.min((a + b) / 2, 3 * a, 3 * b);
  }
  let d = `M${p[0]}`;
  for (let i = 0; i < n - 1; i++) {
    const h = (p[i + 1][0] - p[i][0]) / 3;
    d += `C${p[i][0] + h},${p[i][1] + m[i] * h} ${p[i + 1][0] - h},${p[i + 1][1] - m[i + 1] * h} ${p[i + 1]}`;
  }
  return d;
}

function draw() {
  const svg = document.getElementById('plot');
  const W = svg.clientWidth, H = svg.clientHeight;
  const kx = W / (FRAME.right - FRAME.left), ky = H / (FRAME.bottom - FRAME.top);
  const X = x => (x - FRAME.left) * kx, Y = y => (y - FRAME.top) * ky;
  const vx = t => 791.7 + (t - 0.84) * 20632, vy = v => 550.7 - v * 57500;
  const crisp = v => Math.floor(v) + 0.5;
  const line = (x1, y1, x2, y2, c) => `<path d="M${x1} ${y1}L${x2} ${y2}" stroke="${c}"/>`;
  let minor = '', major = '', labels = '';
  for (let i = -8; i <= 42; i++) {
    const y = crisp(Y(vy(i / 5000)));
    if (i % 5) minor += line(X(588), y, W, y, '#e0e0e0');
    else {
      major += line(X(585), y, W, y, '#b4b4b4');
      labels += `<text class="tick" x="${X(538)}" y="${y + 5}">${(i / 5000).toFixed(i ? 3 : 0).replace('.', ',')}</text>`;
    }
  }
  for (let i = -4; i <= 27; i++) {
    const x = crisp(X(vx(0.84 + i / 500)));
    if (i % 5) minor += line(x, 0, x, Y(654), '#e0e0e0');
    else {
      major += line(x, 0, x, Y(656), '#b4b4b4');
      labels += `<text class="tick" text-anchor="middle" x="${x}" y="${Y(675)}">${(0.84 + i / 500).toFixed(2).replace('.', ',')}</text>`;
    }
  }
  const curves = traces.map(t => {
    const pts = t.points.split(' ').map(s => s.split(',').map(Number)).map(([x, y]) => [X(x + 0.5), Y(y)]);
    return `<path d="${smooth(pts)}" fill="none" stroke="${t.color}" stroke-width="1.400"/>`;
  }).join('');
  const dots = [[351.5, '#99003d'], [545.5, '#006400'], [633.5, '#000066']]
    .map(([y, c]) => `<circle cx="${X(1128.5)}" cy="${Y(y)}" r="4.500" fill="${c}"/>`).join('');
  svg.innerHTML = `<clipPath id="area"><rect x="${X(PLOT.left)}" y="0" width="${W}" height="${Y(PLOT.bottom)}"/></clipPath>` +
    minor + major + line(X(1128.5), 0, X(1128.5), Y(PLOT.bottom), '#c4c4c4') +
    `<g clip-path="url(#area)">${curves}</g>${dots}${labels}` +
    `<text class="title" text-anchor="middle" transform="translate(${X(531)} ${Y(356)}) rotate(-90)">Значения</text>` +
    `<text class="title" text-anchor="middle" x="${X(1256)}" y="${Y(699)}">Секунды</text>`;
}

const rows = [
  ['blue', '1.Вибропреобразователь ЗПДв', 'VYT-KV', 0, 'м/с^2'],
  ['red', '1.Вибропреобразователь ЗПДг', 'VXT-KV', 0, 'м/с^2'],
  ['lime', '2.Вибропреобразователь ППДв', 'VYT-KV', 1, 'м/с^2'],
  ['green', '2.Вибропреобразователь ППДг', 'VXT-KV', 1, 'g'],
  ['navy', '3.Вибропреобразователь ППВхР', 'VT-KVG', 1, 'м/с^2'],
  ['maroon', '4.Вибропреобразователь ЗПВхР', 'VT-KVG', 1, 'м/с^2']
];
document.getElementById('rows').innerHTML = rows.map(([c, point, tag, on, unit]) => `
  <tr class="${c === 'green' ? 'current' : ''}">
    <td><input type="checkbox" aria-label="${point}" ${on ? 'checked' : ''}></td>
    <td><span class="s-${c}">Агрегат KVG079A</span></td><td><span class="s-${c}">${point}</span></td><td><span class="s-${c}">${tag}</span></td>
    <td><span>Виброускорение</span></td><td><span>06.02.2025 14:25:24.313</span></td><td><span>${unit}</span></td><td><span>30193.5</span></td>
    <td><input type="checkbox" aria-label="Норм." checked></td><td><span>0</span></td><td><span>Без</span></td>
  </tr>`).join('');

draw();
addEventListener('resize', draw);
```
